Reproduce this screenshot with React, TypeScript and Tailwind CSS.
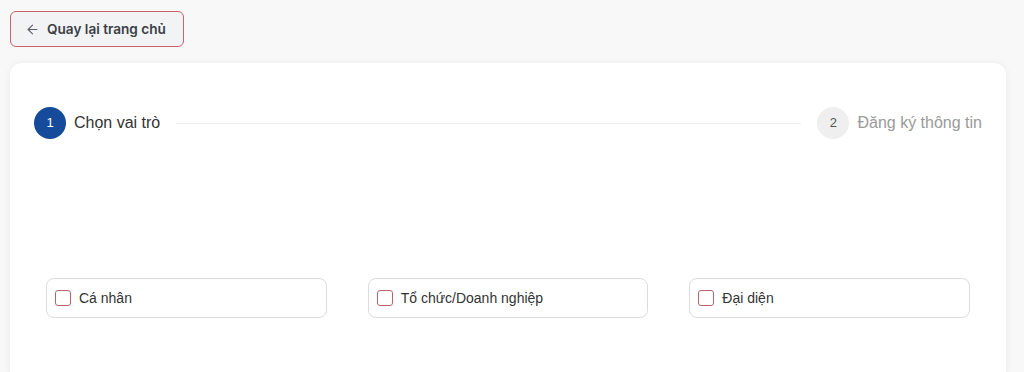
import React, { useState } from 'react';
import { ArrowLeft } from 'lucide-react';

const roles = ['Cá nhân', 'Tổ chức/Doanh nghiệp', 'Đại diện'];

export default function App() {
  const [selected, setSelected] = useState<string[]>([]);

  const toggle = (role: string) => {
    setSelected(prev => (prev.includes(role) ? prev.filter(r => r !== role) : [...prev, role]));
  };

  return (
    <div className="min-h-[372px] bg-[#f8f8f8] pl-[10px] pr-[18px] pt-[11px] font-['Liberation_Sans',Arial,sans-serif]">
      <button className="flex h-[36px] w-[174px] items-center gap-[7px] rounded-[6px] border border-[#c9626b] bg-[#f2f3f5] pl-[14px] font-['Inter',sans-serif] text-[13.6px] font-semibold text-[#3b3f46]">
        <ArrowLeft size={15} strokeWidth={1.8} className="text-[#5b6068]" />
        Quay lại trang chủ
      </button>

      <div className="mt-[16px] h-[320px] rounded-[12px] bg-white px-[24px] pt-[44px] shadow-[0_1px_8px_rgba(0,0,0,0.06)]">
        <div className="flex items-center">
          <div className="flex h-[32px] w-[32px] items-center justify-center rounded-full bg-[#164a9a] text-[13px] text-white">1</div>
          <span className="ml-[8px] text-[16px] text-[#333]">Chọn vai trò</span>
          <div className="mx-[16px] h-px flex-1 bg-[#ececec]"></div>
          <div className="flex h-[32px] w-[32px] items-center justify-center rounded-full bg-[#efefef] text-[13px] text-[#555]">2</div>
          <span className="ml-[8px] text-[16px] text-[#9a9a9a]">Đăng ký thông tin</span>
        </div>

        <div className="mt-[139px] grid grid-cols-3 gap-[41px] px-[12px]">
          {roles.map(role => (
            <label
              key={role}
              className="flex h-[40px] cursor-pointer items-center gap-[8px] rounded-[8px] border border-[#dcdcdc] bg-white pl-[8px]"
            >
              <input
                type="checkbox"
                checked={selected.includes(role)}
                onChange={() => toggle(role)}
                className="h-[16px] w-[16px] appearance-none rounded-[3px] border-[1.5px] border-[#b9636d] bg-white"
              />
              <span className="text-[14px] text-[#333]">{role}</span>
            </label>
          ))}
        </div>
      </div>
    </div>
  );
}
